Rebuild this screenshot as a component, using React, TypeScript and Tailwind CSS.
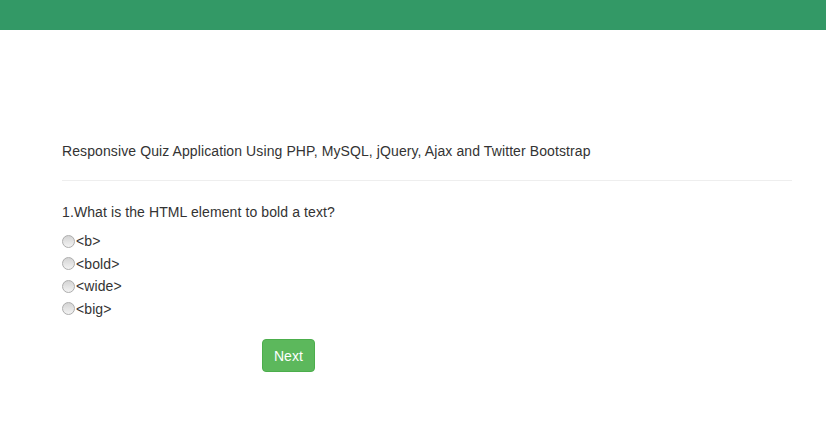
const options = ["<b>", "<bold>", "<wide>", "<big>"];

function Radio() {
  return (
    <span className="inline-block w-[13px] h-[13px] rounded-full border border-[#adadad] bg-gradient-to-b from-[#d4d4d4] to-[#f3f3f3] shrink-0" />
  );
}

export default function App() {
  return (
    <div
      className="w-[826px] h-[437px] bg-white text-[#333] text-[14px] leading-[20px] tracking-[0.1px]"
      style={{ fontFamily: '"Liberation Sans", Arial, sans-serif' }}
    >
      {/* top bar */}
      <div className="h-[30px] bg-[#339966]" />

      <div className="pl-[62px] pr-[34px]">
        <h4 className="pt-[111px] text-[14px] leading-[20px]">
          Responsive Quiz Application Using PHP, MySQL, jQuery, Ajax and Twitter Bootstrap
        </h4>
        <hr className="mt-[19px] border-t border-[#eeeeee]" />

        <p className="mt-[21px]">1.What is the HTML element to bold a text?</p>

        <div className="mt-[8px] flex flex-col">
          {options.map((o) => (
            <label key={o} className="flex items-center h-[22.5px]">
              <Radio />
              <span className="ml-[1px]">{o}</span>
            </label>
          ))}
        </div>

        <button className="mt-[19px] ml-[200px] w-[53px] h-[33px] rounded-[4px] bg-[#5cb85c] border border-[#4cae4c] text-white text-[14px]">
          Next
        </button>
      </div>
    </div>
  );
}
